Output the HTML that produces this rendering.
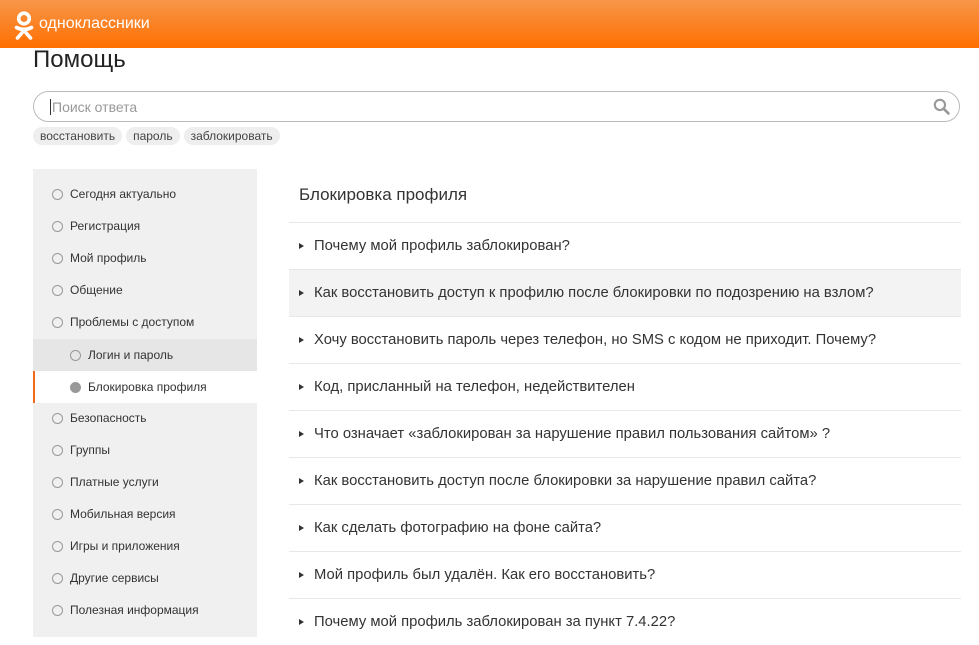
<!DOCTYPE html>
<html><head><meta charset="utf-8"><style>
*{margin:0;padding:0;box-sizing:border-box}
body{width:979px;height:640px;overflow:hidden;background:#fff;font-family:"Liberation Sans",Arial,sans-serif;color:#333;position:relative}
.hd{position:absolute;left:0;top:0;width:979px;height:48px;background:linear-gradient(#f7964a,#ff6f00)}
.hd .t{position:absolute;left:39px;top:15px;color:#fff;font-size:16px}
h1{position:absolute;left:33px;top:46px;font-weight:normal;font-size:24px;color:#222}
.sb{position:absolute;left:33px;top:91px;width:927px;height:31px;border:1px solid #bbb;border-radius:16px}
.sb span{position:absolute;left:16px;top:7px;font-size:14px;color:#999;border-left:1px solid #333;padding-left:1px}
.tags{position:absolute;left:33px;top:127px;font-size:12px;color:#444}
.tags span{display:inline-block;background:#eee;border-radius:9px;padding:2px 7px;margin-right:4px;height:18px}
.side{position:absolute;left:33px;top:169px;width:224px;height:468px;background:#f0f0f0}
.it{position:absolute;left:0;width:224px;height:32px;font-size:12px;line-height:32px;padding-left:37px}
.it:before{content:"";position:absolute;left:19px;top:11px;width:9px;height:9px;border:1px solid #999;border-radius:50%}
.sub{padding-left:55px}.sub:before{left:37px}
.act:before{background:#999;left:35px}
.ttl{position:absolute;left:299px;top:185px;font-size:17px}
.q{position:absolute;left:289px;width:672px;height:47px;border-top:1px solid #e8e8e8;font-size:14.8px;line-height:46px;padding-left:25px}
.q:before{content:"";position:absolute;left:10px;top:20px;border-left:5px solid #333;border-top:3px solid transparent;border-bottom:3px solid transparent}
</style></head><body>
<div class="hd">
<svg style="position:absolute;left:13px;top:11px" width="22" height="30" viewBox="0 0 22 30"><circle cx="11" cy="7.5" r="5.3" fill="none" stroke="#fff" stroke-width="3.6"/><path d="M3.5 16.5q7.5 4 15 0M11 19.5L4.5 27M11 19.5l6.5 7.5" fill="none" stroke="#fff" stroke-width="3.6" stroke-linecap="round"/></svg>
<div class="t">одноклассники</div></div>
<h1>Помощь</h1>
<div class="sb"><span>Поиск ответа</span>
<svg style="position:absolute;right:9px;top:6px" width="17" height="17" viewBox="0 0 16 16"><circle cx="6.5" cy="6.5" r="4.8" fill="none" stroke="#999" stroke-width="2"/><path d="M10 10l4.5 4.5" stroke="#999" stroke-width="2.5" stroke-linecap="round"/></svg></div>
<div class="tags"><span>восстановить</span><span>пароль</span><span>заблокировать</span></div>
<div class="side">
<div class="it" style="top:9px">Сегодня актуально</div>
<div class="it" style="top:41px">Регистрация</div>
<div class="it" style="top:73px">Мой профиль</div>
<div class="it" style="top:105px">Общение</div>
<div class="it" style="top:137px">Проблемы с доступом</div>
<div class="it sub" style="top:170px;background:#e6e6e6">Логин и пароль</div>
<div class="it sub act" style="top:202px;background:#fff;border-left:2px solid #ee6b1e;padding-left:53px">Блокировка профиля</div>
<div class="it" style="top:233px">Безопасность</div>
<div class="it" style="top:265px">Группы</div>
<div class="it" style="top:297px">Платные услуги</div>
<div class="it" style="top:329px">Мобильная версия</div>
<div class="it" style="top:361px">Игры и приложения</div>
<div class="it" style="top:393px">Другие сервисы</div>
<div class="it" style="top:425px">Полезная информация</div>
</div>
<div class="ttl">Блокировка профиля</div>
<div class="q" style="top:222px">Почему мой профиль заблокирован?</div>
<div class="q" style="top:269px;background:#f3f3f3">Как восстановить доступ к профилю после блокировки по подозрению на взлом?</div>
<div class="q" style="top:316px">Хочу восстановить пароль через телефон, но SMS с кодом не приходит. Почему?</div>
<div class="q" style="top:363px">Код, присланный на телефон, недействителен</div>
<div class="q" style="top:410px">Что означает «заблокирован за нарушение правил пользования сайтом» ?</div>
<div class="q" style="top:457px">Как восстановить доступ после блокировки за нарушение правил сайта?</div>
<div class="q" style="top:504px">Как сделать фотографию на фоне сайта?</div>
<div class="q" style="top:551px">Мой профиль был удалён. Как его восстановить?</div>
<div class="q" style="top:598px">Почему мой профиль заблокирован за пункт 7.4.22?</div>
</body></html>
